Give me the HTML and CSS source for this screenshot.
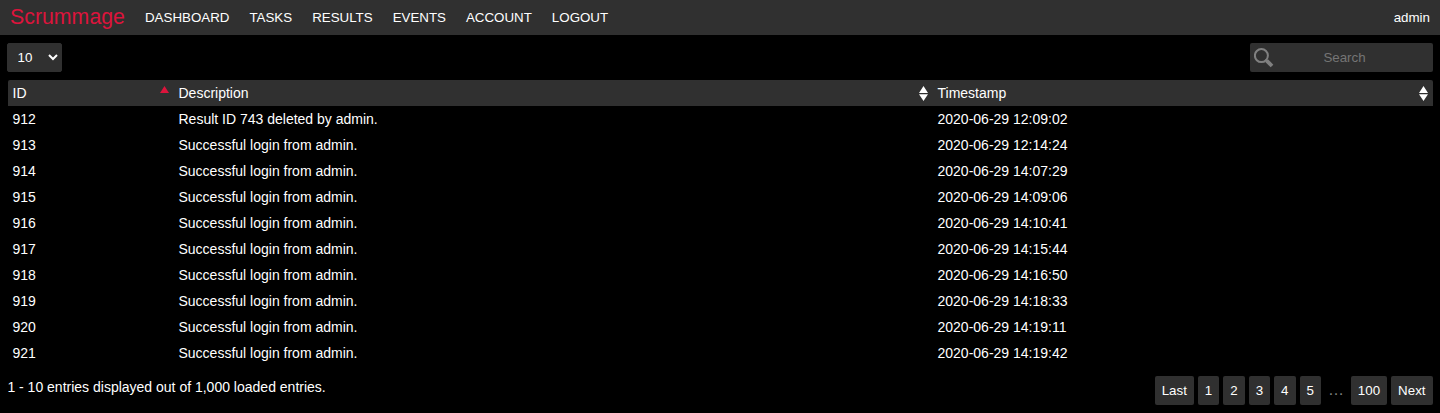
FILE: index.html
```
<!DOCTYPE html>
<html lang="en">
<head>
<meta charset="utf-8">
<title>Scrummage</title>
<link rel="stylesheet" href="styles.css">
</head>
<body>
<nav class="navbar">
  <a class="brand">Scrummage</a>
  <div class="links"><a>DASHBOARD</a><a>TASKS</a><a>RESULTS</a><a>EVENTS</a><a>ACCOUNT</a><a>LOGOUT</a></div>
  <span class="user">admin</span>
</nav>
<main>
  <div class="toolbar">
    <select class="length" aria-label="Entries per page"><option>10</option><option>25</option><option>50</option><option>100</option></select>
    <label class="search">
      <svg width="20" height="20" viewBox="0 0 20 20"><circle cx="7.4" cy="7.6" r="6.5" fill="none" stroke="#808080" stroke-width="2"/><path d="M11.5 11.5L14 14" stroke="#808080" stroke-width="2.4"/><path d="M12.6 12.6L18 18" stroke="#808080" stroke-width="3.8"/></svg>
      <input type="text" placeholder="Search">
    </label>
  </div>
  <table class="events">
    <colgroup><col class="col-id"><col class="col-desc"><col></colgroup>
    <thead><tr>
      <th><div class="head">ID<svg class="asc" width="9" height="7" viewBox="0 0 9 7"><path d="M0 7L4.5 0L9 7Z" fill="#dc143c"/></svg></div></th>
      <th><div class="head">Description<svg width="9" height="15" viewBox="0 0 9 15"><path d="M0 7L4.5 0L9 7ZM0 8.2H9L4.5 15Z" fill="#fff"/></svg></div></th>
      <th><div class="head">Timestamp<svg width="9" height="15" viewBox="0 0 9 15"><path d="M0 7L4.5 0L9 7ZM0 8.2H9L4.5 15Z" fill="#fff"/></svg></div></th>
    </tr></thead>
    <tbody>
      <tr><td>912</td><td>Result ID 743 deleted by admin.</td><td>2020-06-29 12:09:02</td></tr>
      <tr><td>913</td><td>Successful login from admin.</td><td>2020-06-29 12:14:24</td></tr>
      <tr><td>914</td><td>Successful login from admin.</td><td>2020-06-29 14:07:29</td></tr>
      <tr><td>915</td><td>Successful login from admin.</td><td>2020-06-29 14:09:06</td></tr>
      <tr><td>916</td><td>Successful login from admin.</td><td>2020-06-29 14:10:41</td></tr>
      <tr><td>917</td><td>Successful login from admin.</td><td>2020-06-29 14:15:44</td></tr>
      <tr><td>918</td><td>Successful login from admin.</td><td>2020-06-29 14:16:50</td></tr>
      <tr><td>919</td><td>Successful login from admin.</td><td>2020-06-29 14:18:33</td></tr>
      <tr><td>920</td><td>Successful login from admin.</td><td>2020-06-29 14:19:11</td></tr>
      <tr><td>921</td><td>Successful login from admin.</td><td>2020-06-29 14:19:42</td></tr>
    </tbody>
  </table>
  <footer class="footer">
    <div class="info">1 - 10 entries displayed out of 1,000 loaded entries.</div>
    <div class="pages"><a>Last</a><a>1</a><a>2</a><a>3</a><a>4</a><a>5</a><span>…</span><a>100</a><a>Next</a></div>
  </footer>
</main>
</body>
</html>
```
FILE: styles.css
```
* { box-sizing: border-box; }
body {
  margin: 0;
  background: #000;
  color: #fff;
  font: 14px/16px "Liberation Sans", Arial, sans-serif;
}
.navbar {
  display: flex;
  align-items: center;
  height: 35px;
  padding: 0 10px;
  background: #303030;
  font-size: 13.333px;
}
.brand { color: #dc143c; font-size: 21.333px; line-height: 34px; height: 35px; }
.links { display: flex; gap: 20px; margin-left: 20px; }
.user { margin-left: auto; }
main { padding: 8px 7px 0; }
.toolbar { display: flex; justify-content: space-between; height: 29px; }
.length {
  width: 55px;
  height: 29px;
  padding: 0 0 0 5.5px;
  border: 1px solid #303030;
  border-radius: 2px;
  background: #303030;
  color: #fff;
  font: 13.333px "Liberation Sans", Arial, sans-serif;
}
.search {
  display: flex;
  align-items: center;
  width: 183px;
  padding-left: 4px;
  border-radius: 2px;
  background: #303030;
}
.search svg { flex: none; }
.search input {
  flex: 1;
  min-width: 0;
  padding: 0 24px 0 6px;
  border: 0;
  background: transparent;
  color: #fff;
  text-align: center;
  font: 13.333px "Liberation Sans", Arial, sans-serif;
}
.search input::placeholder { color: #757575; }
.events {
  width: 1425px;
  margin: 8px 0 0 1px;
  table-layout: fixed;
  border-collapse: separate;
  border-spacing: 0;
}
.col-id { width: 166px; }
.col-desc { width: 759px; }
.events th, .events td {
  height: 26px;
  padding: 0 4.5px;
  text-align: left;
  font-weight: normal;
}
.events th { padding-right: 5px; background: #303030; }
.events th:first-child { border-top-left-radius: 2px; }
.events th:last-child { border-top-right-radius: 2px; }
.head { display: flex; align-items: center; justify-content: space-between; }
.head .asc { margin-bottom: 7px; }
.footer { display: flex; justify-content: space-between; margin-top: 10px; }
.info { padding: 3px 0 0 .4px; }
.pages {
  display: flex;
  gap: 4px;
  padding-right: .5px;
  font-size: 13.333px;
  line-height: 29px;
}
.pages a { padding: 0 7px; border-radius: 2px; background: #303030; }
.pages span { padding: 0 2.9px 0 3px; color: #808080; font-size: 16px; line-height: 27px; }
```
